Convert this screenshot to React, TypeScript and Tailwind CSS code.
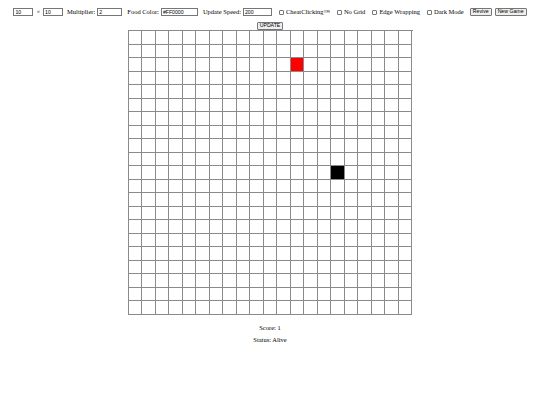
import { useState } from "react";

const SIZE = 21;
const FOOD = { r: 2, c: 12 };
const SNAKE = [{ r: 10, c: 15 }];

function Field({ value, w }: { value: string; w: string }) {
  return (
    <input
      readOnly
      value={value}
      className={`${w} h-[8px] border border-[#767676] bg-white px-[1px] text-[5.2px] leading-none text-black font-['Liberation_Sans',sans-serif] outline-none`}
    />
  );
}

function Check({ label }: { label: string }) {
  return (
    <label className="flex items-center gap-[2px] ml-[7px]">
      <span className="inline-block w-[5px] h-[5px] border border-[#767676] rounded-[1px] bg-white" />
      {label}
    </label>
  );
}

function Btn({ children }: { children: React.ReactNode }) {
  return (
    <button className="h-[8px] px-[2px] border border-[#767676] rounded-[1px] bg-[#efefef] text-[5.2px] leading-none text-black font-['Liberation_Sans',sans-serif]">
      {children}
    </button>
  );
}

export default function App() {
  const [score] = useState(1);

  return (
    <div className="w-[540px] h-[405px] bg-white text-black font-['Liberation_Serif',serif] text-[6.5px]">
      {/* Controles */}
      <div className="flex items-center justify-center pt-[8px] h-[16px]">
        <Field value="10" w="w-[20px]" />
        <span className="mx-[3px]">×</span>
        <Field value="10" w="w-[20px]" />
        <span className="ml-[4px] mr-[2px]">Multiplier:</span>
        <Field value="2" w="w-[25px]" />
        <span className="ml-[5px] mr-[2px]">Food Color:</span>
        <Field value="#FF0000" w="w-[37px]" />
        <span className="ml-[5px] mr-[2px]">Update Speed:</span>
        <Field value="200" w="w-[29px]" />
        <Check label="CheatClicking™" />
        <Check label="No Grid" />
        <Check label="Edge Wrapping" />
        <Check label="Dark Mode" />
        <span className="ml-[6px] flex gap-[3px]">
          <Btn>Revive</Btn>
          <Btn>New Game</Btn>
        </span>
      </div>

      <div className="flex justify-center mt-[6px]">
        <Btn>UPDATE</Btn>
      </div>

      {/* Tabuleiro */}
      <div className="flex justify-center">
        <div className="grid grid-cols-[repeat(21,13.524px)] border-l border-t border-[#8a8a8a] w-[285px]">
          {Array.from({ length: SIZE * SIZE }).map((_, i) => {
            const r = Math.floor(i / SIZE);
            const c = i % SIZE;
            const food = r === FOOD.r && c === FOOD.c;
            const snake = SNAKE.some((s) => s.r === r && s.c === c);
            return (
              <div
                key={i}
                className="h-[13.524px] border-r border-b border-[#8a8a8a] bg-white"
              >
                {food && <div className="w-full h-full bg-[#ff0000]" />}
                {snake && <div className="w-full h-full bg-black" />}
              </div>
            );
          })}
        </div>
      </div>

      <div className="text-center mt-[7px] leading-[12px]">
        <p>Score: {score}</p>
        <p>Status: Alive</p>
      </div>
    </div>
  );
}
